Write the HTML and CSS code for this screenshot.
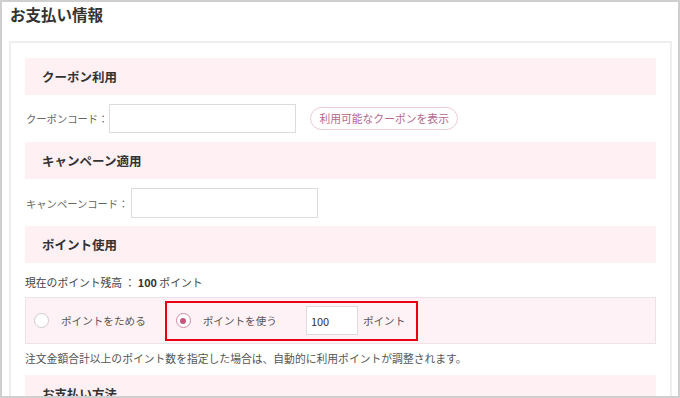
FILE: index.html
```html
<!DOCTYPE html>
<html lang="ja">
<head>
<meta charset="utf-8">
<link rel="stylesheet" href="styles.css">
</head>
<body>
<div class="frame">
  <h1 class="title">お支払い情報</h1>
  <div class="panel">
    <div class="sec-head">クーポン利用</div>
    <div class="row row-coupon">
      <span class="label">クーポンコード：</span>
      <input class="text-input coupon-input" type="text">
      <button class="pill">利用可能なクーポンを表示</button>
    </div>
    <div class="sec-head">キャンペーン適用</div>
    <div class="row row-campaign">
      <span class="label">キャンペーンコード：</span>
      <input class="text-input campaign-input" type="text">
    </div>
    <div class="sec-head">ポイント使用</div>
    <p class="balance">現在のポイント残高 ： <b>100</b> ポイント</p>
    <div class="point-box">
      <label class="opt">
        <span class="radio"></span>
        <span class="opt-text">ポイントをためる</span>
      </label>
      <div class="use-box">
        <label class="opt">
          <span class="radio checked"></span>
          <span class="opt-text">ポイントを使う</span>
        </label>
        <input class="text-input point-input" type="text" value="100">
        <span class="unit">ポイント</span>
      </div>
    </div>
    <p class="note">注文金額合計以上のポイント数を指定した場合は、自動的に利用ポイントが調整されます。</p>
    <div class="sec-head">お支払い方法</div>
  </div>
</div>
</body>
</html>
```
FILE: styles.css
```css
* { box-sizing: border-box; }
html, body { margin: 0; padding: 0; background: #fff; }
body {
  font-family: "Noto Sans CJK JP", "Noto Sans", sans-serif;
  color: #333;
}
.frame {
  width: 680px;
  height: 398px;
  border: 2px solid #cfcfcf;
  overflow: hidden;
  background: #fff;
}
.title {
  margin: 0 0 15px;
  padding: 0 8px;
  font-size: 15.5px;
  font-weight: 700;
  line-height: 24px;
  color: #333;
}
.panel {
  margin: 0 6px 0 7px;
  border: 2px solid #eeeeee;
  border-bottom: none;
  padding: 15px 14px 0;
  height: 400px;
}
.sec-head {
  height: 37px;
  line-height: 37px;
  padding-left: 17px;
  background: #fff0f4;
  font-size: 12.5px;
  font-weight: 700;
  color: #333;
}
.row {
  display: flex;
  align-items: center;
}
.row-coupon { margin: 9px 0 9px; }
.row-campaign { margin: 9px 0 8px; }
.label {
  font-size: 10.3px;
  color: #666;
  padding-left: 1px;
}
.text-input {
  height: 29px;
  border: 1px solid #dcdcdc;
  background: #fff;
  margin: 0;
  padding: 0 4px;
  font-family: inherit;
  font-size: 11px;
  color: #333;
  outline: none;
}
.coupon-input { width: 187px; margin-left: 1px; }
.campaign-input { width: 187px; margin-left: 3px; height: 30px; }
.pill {
  margin-left: 14px;
  height: 23px;
  padding: 0 8px;
  border: 1px solid #edcbd9;
  border-radius: 12px;
  background: #fff;
  font-family: inherit;
  font-size: 10.8px;
  color: #b4698d;
  line-height: 21px;
}
.balance {
  margin: 10px 0 6px;
  font-size: 10.8px;
  line-height: 18px;
  color: #444;
}
.balance b { font-weight: 700; color: #333; }
.point-box {
  height: 47px;
  border: 1px solid #ebe3e7;
  background: #fff2f6;
  display: flex;
  align-items: center;
  padding-left: 8px;
}
.opt {
  display: flex;
  align-items: center;
  gap: 12px;
}
.radio {
  width: 15px;
  height: 15px;
  border-radius: 50%;
  border: 1px solid #cccccc;
  background: #fff;
  display: flex;
  align-items: center;
  justify-content: center;
}
.radio.checked { border-color: #cf8ba4; }
.radio.checked::after {
  content: "";
  width: 6px;
  height: 6px;
  border-radius: 50%;
  background: #c4557e;
}
.opt-text {
  font-size: 10.6px;
  color: #555;
}
.use-box {
  margin-left: 19px;
  height: 40px;
  border: 2px solid #e60012;
  display: flex;
  align-items: center;
  padding: 0 11px 0 9px;
}
.point-input {
  margin-left: 29px;
  width: 52px;
  font-size: 11px;
}
.unit {
  margin-left: 5px;
  font-size: 10.6px;
  color: #555;
}
.note {
  margin: 5px 0 8px;
  font-size: 10.8px;
  line-height: 18px;
  color: #555;
}
```
